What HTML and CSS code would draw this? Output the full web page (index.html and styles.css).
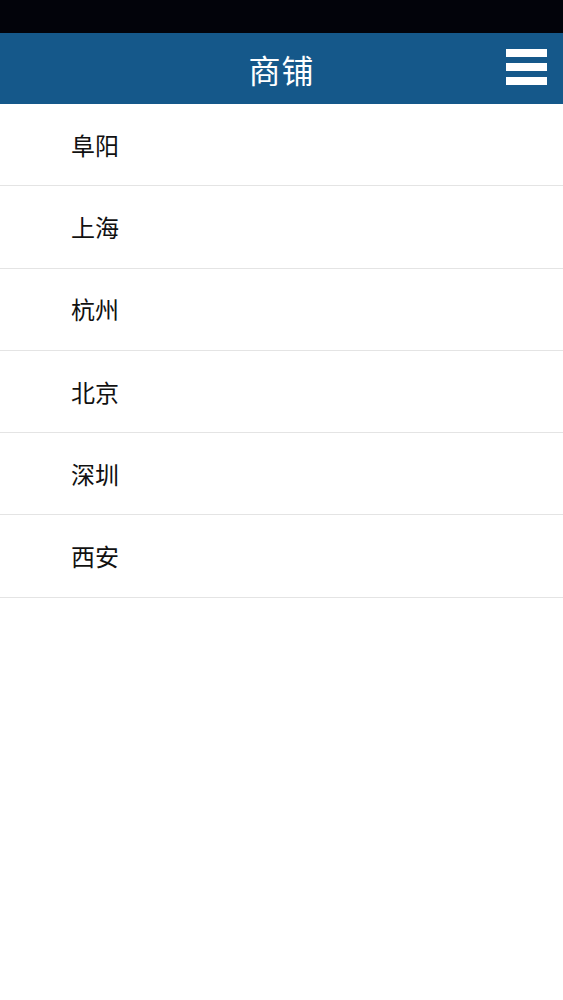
FILE: index.html
```html
<!DOCTYPE html>
<html lang="zh-CN">
<head>
<meta charset="utf-8">
<title>商铺</title>
<link rel="stylesheet" href="styles.css">
</head>
<body>
<div class="status-bar"></div>
<header class="top-bar">
  <h1 class="title">商铺</h1>
  <button class="menu-btn" aria-label="菜单">
    <span class="bar"></span>
    <span class="bar"></span>
    <span class="bar"></span>
  </button>
</header>
<ul class="city-list">
  <li class="city">阜阳</li>
  <li class="city">上海</li>
  <li class="city">杭州</li>
  <li class="city">北京</li>
  <li class="city">深圳</li>
  <li class="city">西安</li>
</ul>
</body>
</html>
```
FILE: styles.css
```css
html, body {
  margin: 0;
  padding: 0;
  background: #ffffff;
  font-family: "Noto Sans CJK SC", "Noto Sans", sans-serif;
}
.status-bar {
  height: 33px;
  background: #02030a;
}
.top-bar {
  height: 71px;
  background: #15588a;
  display: flex;
  align-items: center;
  justify-content: center;
  position: relative;
}
.title {
  margin: 0;
  color: #ffffff;
  font-size: 32px;
  font-weight: 400;
  line-height: 1;
  letter-spacing: 1px;
}
.menu-btn {
  position: absolute;
  right: 16px;
  top: 16px;
  width: 41px;
  padding: 0;
  border: 0;
  background: transparent;
  display: flex;
  flex-direction: column;
  gap: 6px;
}
.bar {
  display: block;
  height: 8px;
  background: #ffffff;
}
.city-list {
  list-style: none;
  margin: 0;
  padding: 0;
}
.city {
  height: 81.3px;
  border-bottom: 1px solid #e4e4e4;
  display: flex;
  align-items: center;
  padding-left: 71px;
  font-size: 24px;
  color: #111111;
  line-height: 1;
}
```
